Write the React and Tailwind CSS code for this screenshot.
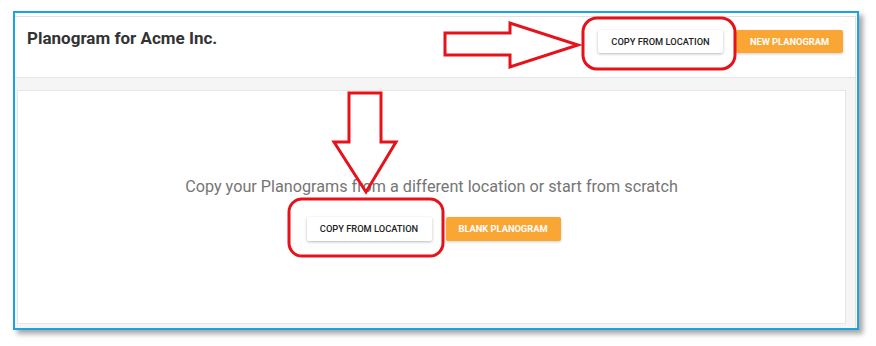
import React from 'react';

const font = { fontFamily: 'Roboto, "Liberation Sans", sans-serif' };

const WhiteBtn = ({ children, className = '' }) => (
  <button className={`bg-white text-[#222] text-[9.3px] font-medium rounded-[2px] shadow-[0_1px_3px_rgba(0,0,0,0.28)] flex items-center justify-center ${className}`}>
    {children}
  </button>
);

const OrangeBtn = ({ children, className = '' }) => (
  <button className={`bg-[#f9a634] text-white text-[9.3px] font-bold rounded-[2px] shadow-[0_1px_3px_rgba(0,0,0,0.2)] flex items-center justify-center ${className}`}>
    {children}
  </button>
);

export default function App() {
  return (
    <div className="relative w-[876px] h-[346px] bg-white pl-[13px] pt-[11px]" style={font}>
      {/* framed screenshot */}
      <div className="w-[846px] h-[319px] border-2 border-[#1ba4df] bg-white shadow-[4px_4px_5px_rgba(0,0,0,0.35)] flex flex-col">
        <div className="mt-[3px] mr-[1px] flex-1 flex flex-col border-t border-r border-[#e2e2e2]">
          {/* header */}
          <div className="h-[61px] border-b border-[#e6e6e6] flex justify-between pl-[12px] pr-[12px]">
            <h1 className="pt-[11px] text-[17px] leading-[20px] font-bold text-[#333]">Planogram for Acme Inc.</h1>
            <div className="pt-[13px] flex gap-[13px]">
              <WhiteBtn className="w-[125px] h-[23px]">COPY FROM LOCATION</WhiteBtn>
              <OrangeBtn className="w-[107px] h-[23px]">NEW PLANOGRAM</OrangeBtn>
            </div>
          </div>
          {/* body */}
          <div className="flex-1 bg-[#f5f5f5] pl-[2px] pt-[12px] pr-[9px] pb-[4px] flex">
            <div className="flex-1 bg-white border border-[#e6e6e6] flex flex-col items-center justify-center">
              <p className="text-[16.2px] leading-6 text-[#757575] mt-[2px]">
                Copy your Planograms from a different location or start from scratch
              </p>
              <div className="mt-[18px] flex gap-[14px] pl-[4px]">
                <WhiteBtn className="w-[125px] h-[24px]">COPY FROM LOCATION</WhiteBtn>
                <OrangeBtn className="w-[115px] h-[24px]">BLANK PLANOGRAM</OrangeBtn>
              </div>
            </div>
          </div>
        </div>
      </div>

      {/* red annotations */}
      <svg className="absolute inset-0 pointer-events-none" width="876" height="346" viewBox="0 0 876 346">
        <g fill="none" stroke="#e5121b" strokeWidth="3" strokeLinejoin="miter">
          <polygon points="445,33 510,33 510,23 578,45 510,67 510,55 445,55" />
          <rect x="583" y="18" width="152" height="51" rx="14" />
          <polygon points="349,93 381,93 381,142 396,142 366,192 334,142 349,142" />
          <rect x="289" y="199" width="154" height="57" rx="13" />
        </g>
      </svg>
    </div>
  );
}
